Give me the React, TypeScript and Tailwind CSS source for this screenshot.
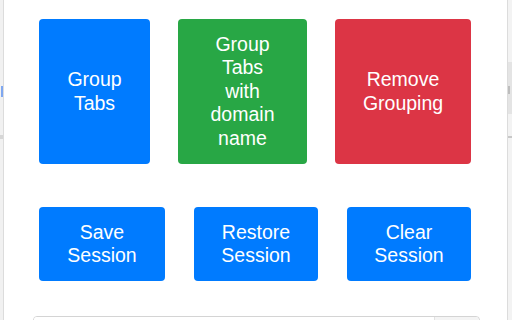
import React from "react";

export default function App() {
  const font = { fontFamily: '"Liberation Sans", Arial, sans-serif' };
  return (
    <div className="flex h-[320px] w-[512px] overflow-hidden bg-white" style={font}>
      {/* left browser strip */}
      <div className="flex w-[3px] shrink-0 flex-col bg-[#f1f1f1]">
        <div className="h-[86px] shrink-0" />
        <div className="ml-[1px] h-[11px] w-[2px] shrink-0 bg-[#7fa7f0]" />
        <div className="h-[38px] shrink-0" />
        <div className="h-[4px] shrink-0 bg-[#d6d6d6]" />
      </div>
      <div className="w-[1px] shrink-0 bg-[#dcdcdc]" />
      {/* main popup */}
      <div className="flex flex-1 flex-col pt-[19px] text-white">
        <div className="ml-[35px] flex h-[145px] shrink-0 gap-[28px]">
          <div className="flex w-[111px] items-center justify-center rounded-[4px] bg-[#007bff] px-4 text-center text-[19.5px] leading-[1.2]">
            Group Tabs
          </div>
          <div className="flex w-[129px] items-center justify-center rounded-[4px] bg-[#28a745] px-[26px] text-center text-[19.5px] leading-[1.2]">
            Group Tabs with domain name
          </div>
          <div className="flex w-[136px] items-center justify-center rounded-[4px] bg-[#dc3545] px-4 text-center text-[19.5px] leading-[1.2]">
            Remove Grouping
          </div>
        </div>
        <div className="ml-[35px] mt-[43px] flex h-[74px] shrink-0 gap-[29px]">
          <div className="flex w-[126px] items-center justify-center rounded-[4px] bg-[#007bff] px-5 text-center text-[19.5px] leading-[1.2]">
            Save Session
          </div>
          <div className="flex w-[124px] items-center justify-center rounded-[4px] bg-[#007bff] px-5 text-center text-[19.5px] leading-[1.2]">
            Restore Session
          </div>
          <div className="flex w-[124px] items-center justify-center rounded-[4px] bg-[#007bff] px-5 text-center text-[19.5px] leading-[1.2]">
            Clear Session
          </div>
        </div>
        <div className="ml-[29px] mt-[35px] flex h-[30px] w-[447px] shrink-0 overflow-hidden rounded-[4px] border border-[#d4d4d4]">
          <div className="flex-1 bg-white" />
          <div className="mr-[1px] w-[44px] border-l border-[#e2e2e2] bg-[#f4f4f4]" />
        </div>
      </div>
      <div className="w-[1px] shrink-0 bg-[#dcdcdc]" />
      {/* right browser strip */}
      <div className="flex w-[4px] shrink-0 flex-col bg-[#f3f3f3]">
        <div className="h-[62px] shrink-0" />
        <div className="flex h-[52px] shrink-0 flex-col bg-[#e4e4e4]">
          <div className="h-[24px] shrink-0" />
          <div className="h-[8px] w-[2px] shrink-0 bg-[#bdbdbd]" />
        </div>
        <div className="h-[22px] shrink-0" />
        <div className="h-[2px] shrink-0 bg-[#c8c8c8]" />
      </div>
    </div>
  );
}
